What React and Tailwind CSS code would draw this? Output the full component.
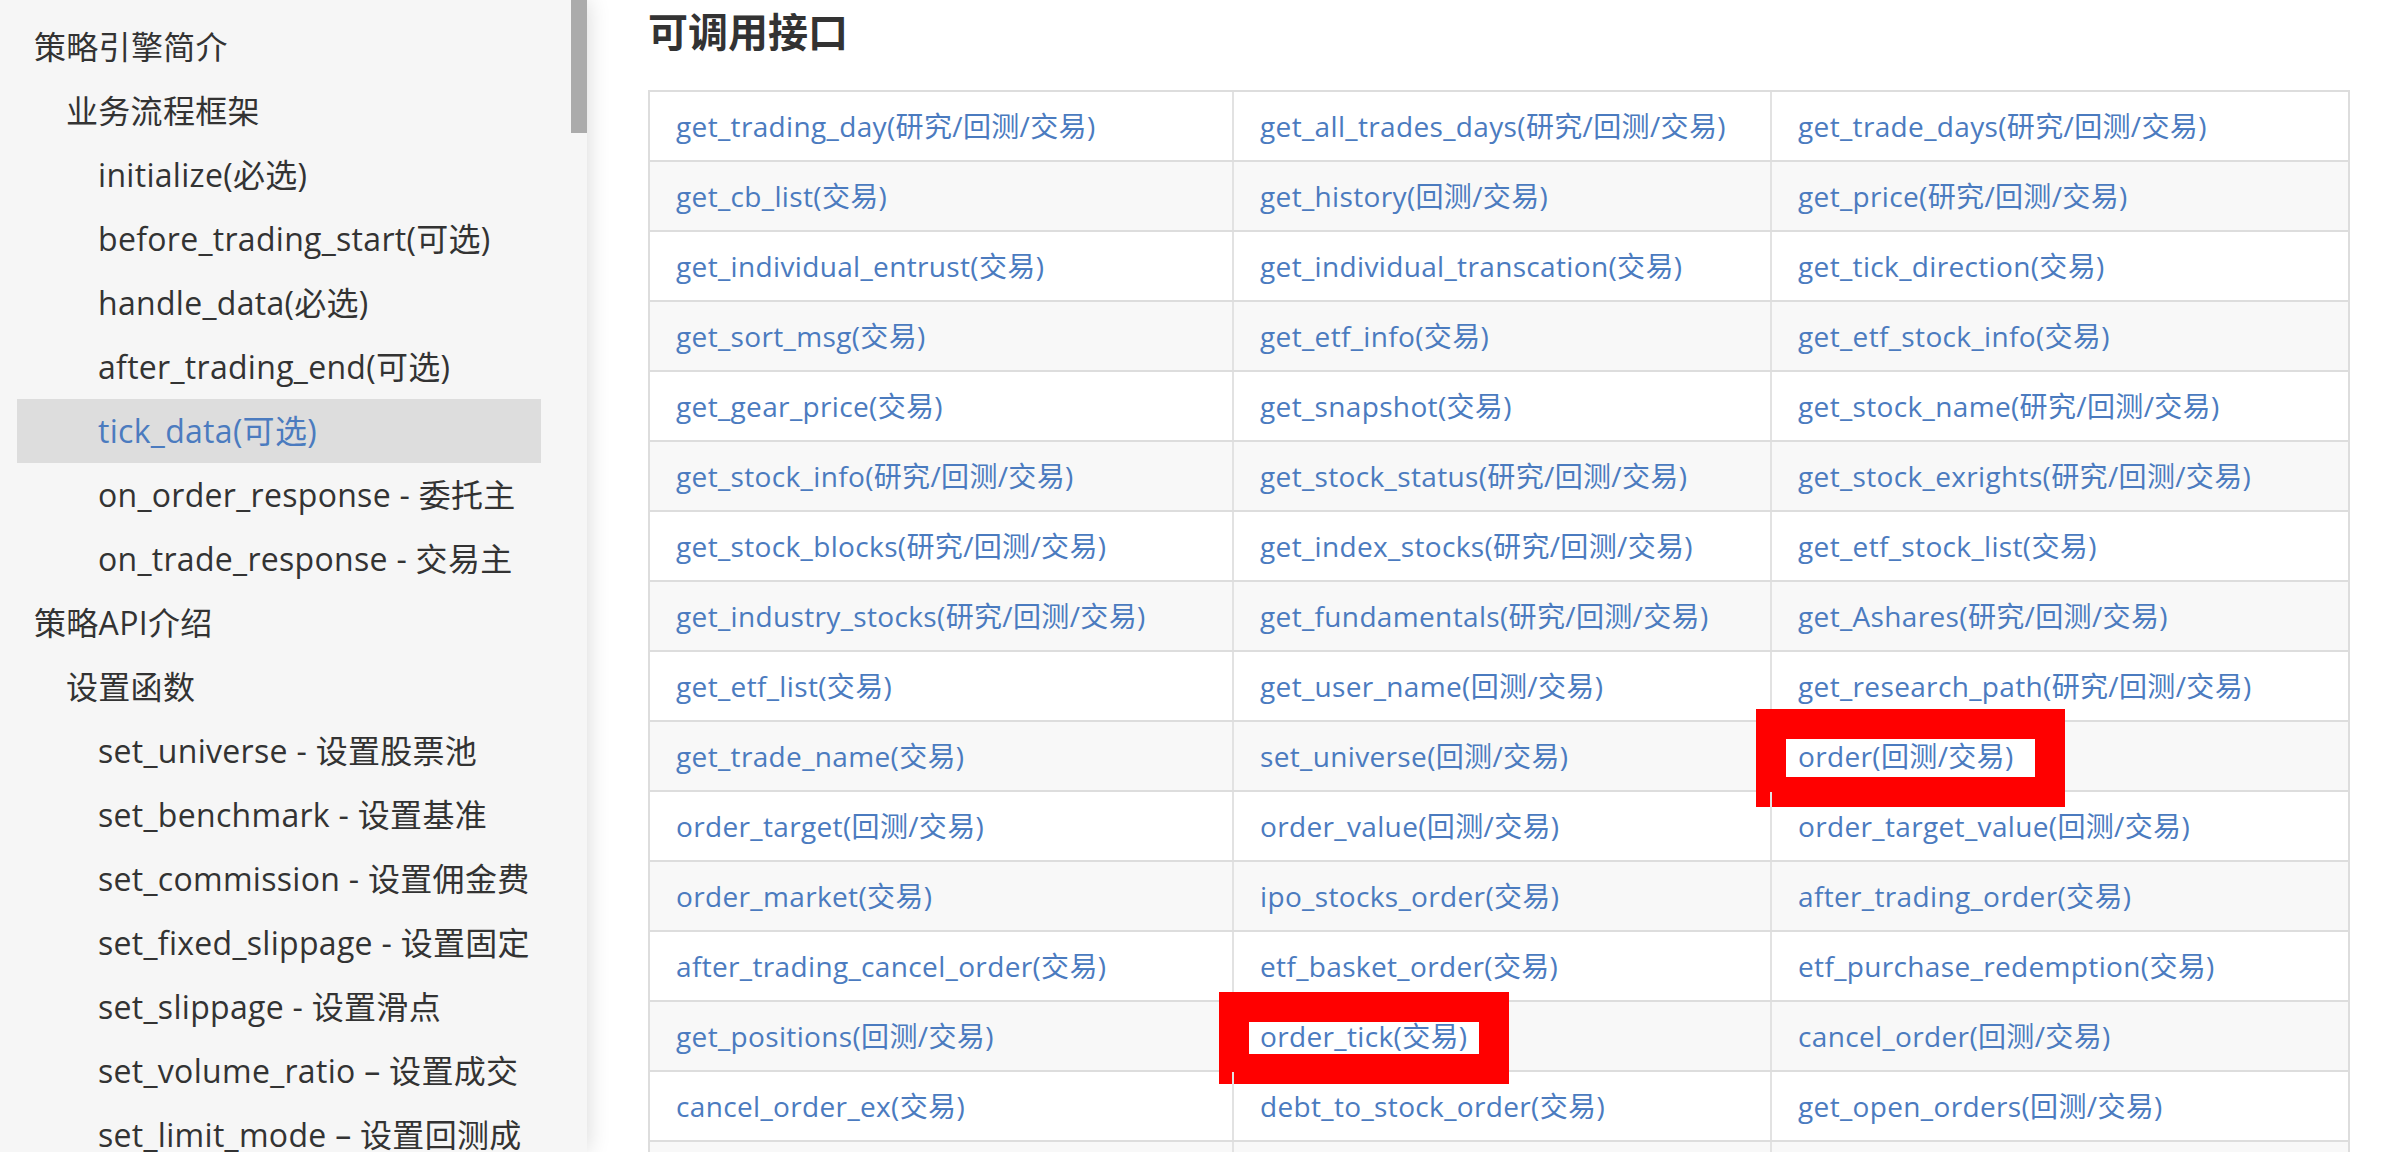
const navItems = [
  { label: "策略引擎简介", level: 0 },
  { label: "业务流程框架", level: 1 },
  { label: "initialize(必选)", level: 2 },
  { label: "before_trading_start(可选)", level: 2 },
  { label: "handle_data(必选)", level: 2 },
  { label: "after_trading_end(可选)", level: 2 },
  { label: "tick_data(可选)", level: 2, active: true },
  { label: "on_order_response - 委托主", level: 2 },
  { label: "on_trade_response - 交易主", level: 2 },
  { label: "策略API介绍", level: 0 },
  { label: "设置函数", level: 1 },
  { label: "set_universe - 设置股票池", level: 2 },
  { label: "set_benchmark - 设置基准", level: 2 },
  { label: "set_commission - 设置佣金费", level: 2 },
  { label: "set_fixed_slippage - 设置固定", level: 2 },
  { label: "set_slippage - 设置滑点", level: 2 },
  { label: "set_volume_ratio – 设置成交", level: 2 },
  { label: "set_limit_mode – 设置回测成", level: 2 },
];

const indent = ["pl-[17px]", "pl-[49px]", "pl-[81px]"];

const rows = [
  ["get_trading_day(研究/回测/交易)", "get_all_trades_days(研究/回测/交易)", "get_trade_days(研究/回测/交易)"],
  ["get_cb_list(交易)", "get_history(回测/交易)", "get_price(研究/回测/交易)"],
  ["get_individual_entrust(交易)", "get_individual_transcation(交易)", "get_tick_direction(交易)"],
  ["get_sort_msg(交易)", "get_etf_info(交易)", "get_etf_stock_info(交易)"],
  ["get_gear_price(交易)", "get_snapshot(交易)", "get_stock_name(研究/回测/交易)"],
  ["get_stock_info(研究/回测/交易)", "get_stock_status(研究/回测/交易)", "get_stock_exrights(研究/回测/交易)"],
  ["get_stock_blocks(研究/回测/交易)", "get_index_stocks(研究/回测/交易)", "get_etf_stock_list(交易)"],
  ["get_industry_stocks(研究/回测/交易)", "get_fundamentals(研究/回测/交易)", "get_Ashares(研究/回测/交易)"],
  ["get_etf_list(交易)", "get_user_name(回测/交易)", "get_research_path(研究/回测/交易)"],
  ["get_trade_name(交易)", "set_universe(回测/交易)", "order(回测/交易)"],
  ["order_target(回测/交易)", "order_value(回测/交易)", "order_target_value(回测/交易)"],
  ["order_market(交易)", "ipo_stocks_order(交易)", "after_trading_order(交易)"],
  ["after_trading_cancel_order(交易)", "etf_basket_order(交易)", "etf_purchase_redemption(交易)"],
  ["get_positions(回测/交易)", "order_tick(交易)", "cancel_order(回测/交易)"],
  ["cancel_order_ex(交易)", "debt_to_stock_order(交易)", "get_open_orders(回测/交易)"],
  ["get_trades(回测/交易)", "get_position(回测/交易)", "get_all_positions(交易)"],
];

const colClass = [
  "border-r-2 border-[#e2e2e2]",
  "border-r-2 border-[#e2e2e2]",
  "",
];

// red annotation frames drawn over two of the cells
function Frame({ text }) {
  if (text === "order(回测/交易)") {
    return (
      <div className="absolute left-[-16px] top-[-13px] z-0 h-[98px] w-[309px] border-[30px] border-[#ff0000] bg-white" />
    );
  }
  if (text === "order_tick(交易)") {
    return (
      <div className="absolute left-[-15px] top-[-10px] z-0 h-[92px] w-[290px] border-[30px] border-[#ff0000] bg-white" />
    );
  }
  return null;
}

function Sidebar() {
  return (
    <aside className="relative z-10 flex h-full w-[587px] shrink-0 bg-[#f6f6f6] shadow-[0_0_22px_rgba(0,0,0,0.16)]">
      <nav className="flex-1 pt-[15px]">
        {navItems.map((item) => (
          <div
            key={item.label}
            className={`ml-[17px] h-16 w-[524px] whitespace-nowrap text-[32px] leading-[64px] tracking-[0.3px] ${indent[item.level]} ${
              item.active ? "bg-[#dddddd] text-[#4b7bbf]" : "text-[#333333]"
            }`}
          >
            {item.label}
          </div>
        ))}
      </nav>
      <div className="w-4 shrink-0">
        <div className="h-[133px] w-4 bg-[#ababab]" />
      </div>
    </aside>
  );
}

export default function App() {
  return (
    <div
      className="flex h-screen w-full overflow-hidden bg-white"
      style={{ fontFamily: '"Open Sans", "Noto Sans CJK SC", sans-serif' }}
    >
      <Sidebar />
      <main className="flex-1 overflow-hidden pl-[61px]">
        <h2
          className="text-[40px] font-bold leading-[60px] text-[#333333]"
          style={{ fontFamily: '"Noto Sans CJK SC", sans-serif' }}
        >
          可调用接口
        </h2>
        <div className="mt-[30px] w-[1702px] border-2 border-[#dddddd]">
          {rows.map((row, i) => (
            <div
              key={i}
              className={`grid h-[70px] grid-cols-[584px_538px_576px] border-b-2 border-[#dddddd] ${
                i % 2 === 1 ? "bg-[#f8f8f8]" : "bg-white"
              }`}
            >
              {row.map((cell, j) => (
                <div
                  key={j}
                  className={`relative flex items-center px-[26px] text-[28px] tracking-[0.35px] text-[#4b7bbf] ${colClass[j]}`}
                >
                  <Frame text={cell} />
                  <a className="relative z-10 whitespace-nowrap" href="#">
                    {cell}
                  </a>
                </div>
              ))}
            </div>
          ))}
        </div>
      </main>
    </div>
  );
}
